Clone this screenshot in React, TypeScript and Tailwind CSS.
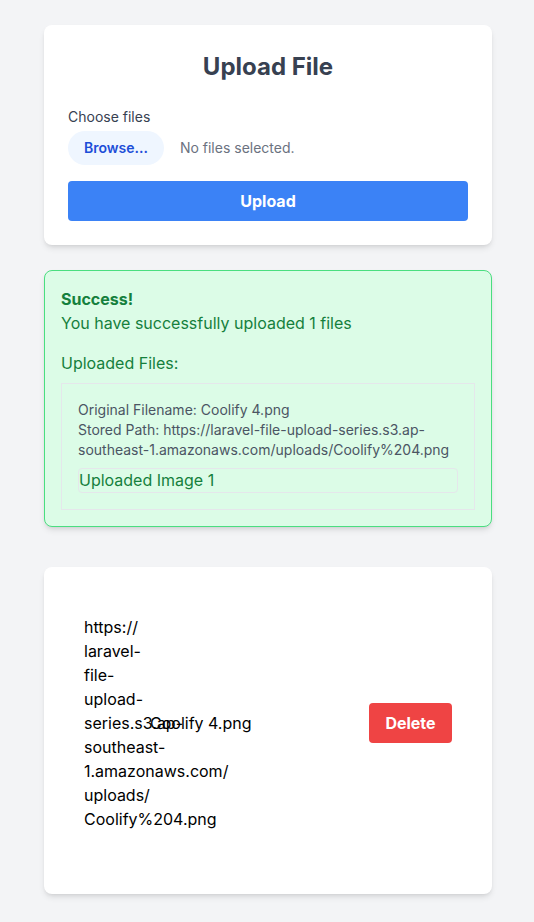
const urlLines = [
  "https://",
  "laravel-",
  "file-",
  "upload-",
  "series.s3.ap-",
  "southeast-",
  "1.amazonaws.com/",
  "uploads/",
  "Coolify%204.png",
];

export default function App() {
  return (
    <div
      className="min-h-screen bg-[#f3f4f6] pt-[25px] pb-8"
      style={{ fontFamily: "Inter, 'Noto Sans', sans-serif" }}
    >
      <div className="w-[448px] ml-[44px]">
        {/* upload form */}
        <div className="bg-white rounded-lg shadow-md px-6 pt-[26px] pb-6">
          <h1 className="text-2xl font-bold text-[#374151] text-center mb-6">Upload File</h1>
          <label className="block text-sm text-[#374151]">Choose files</label>
          <div className="flex items-center gap-4 mt-1">
            <span className="bg-[#eff6ff] text-[#1d4ed8] text-sm font-semibold rounded-full px-4 py-[7px]">
              Browse...
            </span>
            <span className="text-sm text-[#6b7280]">No files selected.</span>
          </div>
          <button className="w-full mt-4 bg-[#3b82f6] text-white font-bold rounded py-2">Upload</button>
        </div>

        {/* success message */}
        <div className="mt-[25px] bg-[#dcfce7] border border-[#4ade80] text-[#15803d] rounded-lg shadow-md p-4">
          <p className="font-bold">Success!</p>
          <p>You have successfully uploaded 1 files</p>
          <p className="mt-4">Uploaded Files:</p>
          <div className="mt-2 border border-[#e5e7eb] p-4">
            <p className="text-sm text-[#4b5563]">Original Filename: Coolify 4.png</p>
            <p className="text-sm text-[#4b5563]">
              Stored Path: https://laravel-file-upload-series.s3.ap-southeast-1.amazonaws.com/uploads/Coolify%204.png
            </p>
            <div className="mt-2 border border-[#e5e7eb] rounded h-[25px] leading-[23px]">Uploaded Image 1</div>
          </div>
        </div>

        {/* files table */}
        <div className="mt-[40px] bg-white rounded-lg shadow-md pl-10 pt-[48px] pb-[63px] text-black">
          <div className="flex items-center">
            <div className="w-[66px] whitespace-nowrap">
              {urlLines.map((l) => (
                <div key={l} className="leading-6">
                  {l}
                </div>
              ))}
            </div>
            <div className="w-[219px]">Coolify 4.png</div>
            <button className="bg-[#ef4444] text-white font-bold rounded px-4 py-2 w-[83px]">Delete</button>
          </div>
        </div>
      </div>
    </div>
  );
}
